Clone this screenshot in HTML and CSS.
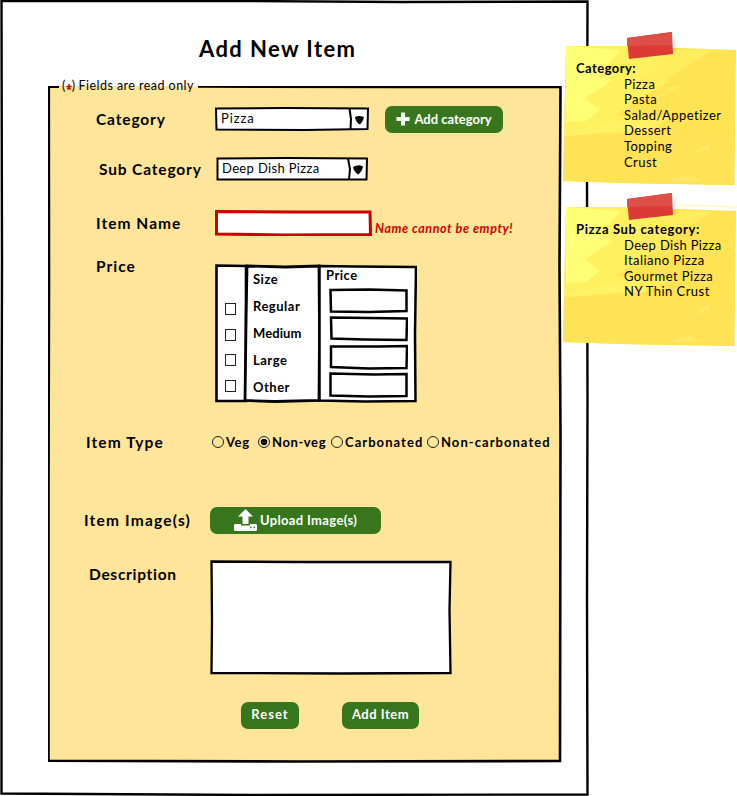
FILE: index.html
```
<!DOCTYPE html>
<html lang="en">
<head>
<meta charset="utf-8">
<title>Add New Item</title>
<link rel="stylesheet" href="styles.css">
</head>
<body>
<div class="board">
  <main class="page">
    <svg class="sketch" viewBox="0 0 589 796" preserveAspectRatio="none" aria-hidden="true">
      <path d="M1.500 1L240 1L400 2L587.500 1.500L587 180L587.500 400L587 600L587.500 794.500L250 795L1.500 793.500L1.500 500L2 260Z" fill="#fff" stroke="#000" stroke-width="2.4"/>
    </svg>
    <h1 class="title"><span>Add New Item</span></h1>
    <form class="form">
      <svg class="sketch" viewBox="0 0 514 677" preserveAspectRatio="none" aria-hidden="true">
        <path d="M0 0H513V676H0Z" fill="#ffe599"/>
        <path d="M11 .8H.8L1 200L.5 400L.5 674.800L250 675.500L512 675L512.500 350L511.500 180L512.500 1L350 1L150 .500" fill="none" stroke="#000" stroke-width="2.6"/>
      </svg>
      <div class="legend">(<svg class="star" viewBox="0 0 8 8"><path d="M4 0V4M.5 3L4 4L7.500 3M2 7.500L4 4L6 7.500" fill="none" stroke="#d00000" stroke-width="2"/></svg>) <span>Fields are read only</span></div>

      <div class="row row-category">
        <div class="label l-category">Category</div>
        <div class="select select-category">
          <svg class="sketch" viewBox="0 0 154 24" preserveAspectRatio="none"><path d="M1 1.500L70 1L153 1.500L152.500 22L90 23L1.500 22.500Z" fill="#fff" stroke="#000" stroke-width="2"/><path d="M134.500 1.500L136 12L135.500 22.500" fill="none" stroke="#000" stroke-width="2"/><path d="M140 10Q144 8 149 10Q148 15 145 17.500Q141 16 140 10Z"/></svg>
          <span class="t-pizza">Pizza</span>
        </div>
        <button type="button" class="button add-category"><svg class="plus" viewBox="0 0 14 14"><path d="M7 .5V13.500M.5 7H13.500" stroke="#fff" stroke-width="4"/></svg><span>Add category</span></button>
      </div>

      <div class="row row-sub">
        <div class="label l-sub">Sub Category</div>
        <div class="select select-sub">
          <svg class="sketch" viewBox="0 0 152 24" preserveAspectRatio="none"><path d="M1.500 1.500L70 1L151 1.500L150.500 22.500L90 22.500L1.500 22.500Z" fill="#fff" stroke="#000" stroke-width="2"/><path d="M132 1.500L134 12L133 22.500" fill="none" stroke="#000" stroke-width="2"/><path d="M137 10Q142 7 147 9.500Q146 15 142 17.500Q138 15 137 10Z"/></svg>
          <span>Deep Dish Pizza</span>
        </div>
      </div>

      <div class="row row-name">
        <div class="label l-name">Item Name</div>
        <div class="name-input">
          <svg class="sketch" viewBox="0 0 157 26" preserveAspectRatio="none"><path d="M1.500 1.500L80 2L155 2L155.500 24.500L70 25L1.500 24Z" fill="#fff" stroke="#cc0000" stroke-width="3"/></svg>
        </div>
        <div class="error">Name cannot be empty!</div>
      </div>

      <div class="row row-price">
        <div class="label l-price">Price</div>
        <div class="table">
          <svg class="sketch" viewBox="0 0 202 139" preserveAspectRatio="none"><path d="M1.500 1.500L31 2V137L1.500 137Z" fill="#fff" stroke="#000" stroke-width="2.600"/><path d="M32 2L70 3L104 2L104.500 70L104 136.500L60 137.500L30 136.500L31 60Z" fill="#fff" stroke="#000" stroke-width="2.800"/><path d="M104.500 2L140 2.500L201 3L200 70L200.500 137L150 137.500L104.500 136.500Z" fill="#fff" stroke="#000" stroke-width="2.500"/></svg>
          <div class="checks"><i class="check"></i><i class="check"></i><i class="check"></i><i class="check"></i></div>
          <div class="sizes"><span>Size</span><span>Regular</span><span class="tight">Medium</span><span>Large</span><span>Other</span></div>
          <div class="prices">
            <span>Price</span>
            <svg class="amount" viewBox="0 0 79 26"><path d="M1.500 2L40 1.500L77.500 2.500V23L40 24L2 23.500Z" fill="#fff" stroke="#000" stroke-width="2.500"/></svg>
            <svg class="amount" viewBox="0 0 79 26"><path d="M2 1.500L40 2L78 2.500L77.500 24L35 23.500L2.500 22.500Z" fill="#fff" stroke="#000" stroke-width="2.500"/></svg>
            <svg class="amount" viewBox="0 0 79 26"><path d="M2 2.500L50 2.500L78 2L77.500 24L40 24.500L2 23Z" fill="#fff" stroke="#000" stroke-width="2.500"/></svg>
            <svg class="amount" viewBox="0 0 79 26"><path d="M1.500 1.500L45 2.500L77.500 2V24L40 24.500L1.500 23.500Z" fill="#fff" stroke="#000" stroke-width="2.500"/></svg>
          </div>
        </div>
      </div>

      <div class="row row-type">
        <div class="label l-type">Item Type</div>
        <div class="radios">
          <label class="radio r-veg"><i class="dot"></i><span>Veg</span></label>
          <label class="radio r-non"><i class="dot on"></i><span>Non-veg</span></label>
          <label class="radio r-carb wide"><i class="dot"></i><span>Carbonated</span></label>
          <label class="radio wide"><i class="dot"></i><span>Non-carbonated</span></label>
        </div>
      </div>

      <div class="row row-image">
        <div class="label l-image">Item Image(s)</div>
        <button type="button" class="button upload"><svg class="upload-icon" viewBox="0 0 23 22"><path d="M11.500 0L19 7.500H14.500V15H8.500V7.500H4Z" fill="#fff"/><path d="M1 15H7V16.500H16V15H22L23 16V21L22 22H1L0 21V16Z" fill="#fff"/><path d="M16 18.500H17.500M19.500 18.500H21" stroke="#38761d" stroke-width="1.300"/></svg><span>Upload Image(s)</span></button>
      </div>

      <div class="row row-desc">
        <div class="label l-desc">Description</div>
        <div class="textarea">
          <svg class="sketch" viewBox="0 0 242 115" preserveAspectRatio="none"><path d="M1.500 1.500L90 2L240.500 2L239.500 50L240.500 113L130 113.500L1.500 113L2 60Z" fill="#fff" stroke="#000" stroke-width="2.300"/></svg>
        </div>
      </div>

      <div class="actions">
        <button type="button" class="button reset">Reset</button>
        <button type="button" class="button add-item">Add Item</button>
      </div>
    </form>
  </main>

  <aside class="notes">
    <section class="note">
      <svg class="paper" viewBox="0 0 174 155"><path d="M3 14L60 14L173 18L171.500 153L110 152L60 151L0 149L1 104Z" fill="#ffe352"/><path d="M3 14H62L110 20L74 51L108 48L52 83L110 86L80 100L1 104Z" fill="#fff060"/><path d="M3 14L58 18L36 42L50 48L22 66L37 78L23 89L3 90Z" fill="#ffff76"/><path d="M110 18H150L85 59L125 51L64 80L106 58L78 48Z" fill="#ffed5d"/><path d="M1 105L48 101L100 99L150 88L135 110L171 104V153L60 151L0 149Z" fill="#ffe255"/><path d="M4 101L50 90L100 94L46 99L2 104Z" fill="#fff266"/><path d="M124 125L145 112L147 116ZM104 149L126 142L138 149Z" fill="#ffe967"/><path d="M64 6L109 0L110 22L66 27Z" fill="#dc3a34"/><path d="M64 6L109 0V13L64 14Z" fill="#dd4f48"/></svg>
      <h2 class="n-category">Category:</h2>
      <ul><li>Pizza</li><li>Pasta</li><li>Salad/Appetizer</li><li>Dessert</li><li>Topping</li><li>Crust</li></ul>
    </section>
    <section class="note">
      <svg class="paper" viewBox="0 0 174 155"><path d="M116 12L174 14" stroke="#fff799" stroke-width="1"/><path d="M3 14L60 14L173 18L171.500 153L110 152L60 151L0 149L1 104Z" fill="#ffe352"/><path d="M3 14H62L110 20L74 51L108 48L52 83L110 86L80 100L1 104Z" fill="#fff060"/><path d="M3 14L58 18L36 42L50 48L22 66L37 78L23 89L3 90Z" fill="#ffff76"/><path d="M110 18H150L85 59L125 51L64 80L106 58L78 48Z" fill="#ffed5d"/><path d="M1 105L48 101L100 99L150 88L135 110L171 104V153L60 151L0 149Z" fill="#ffe255"/><path d="M4 101L50 90L100 94L46 99L2 104Z" fill="#fff266"/><path d="M124 125L145 112L147 116ZM104 149L126 142L138 149Z" fill="#ffe967"/><path d="M64 6L109 0L110 22L66 27Z" fill="#dc3a34"/><path d="M64 6L109 0V13L64 14Z" fill="#dd4f48"/></svg>
      <h2 class="n-sub">Pizza Sub category:</h2>
      <ul><li class="i-deep">Deep Dish Pizza</li><li>Italiano Pizza</li><li>Gourmet Pizza</li><li>NY Thin Crust</li></ul>
    </section>
  </aside>
</div>
</body>
</html>
```
FILE: styles.css
```
* { box-sizing: border-box; }
body { margin: 0; background: #fff; color: #000; font-family: Lato, "Noto Sans", sans-serif; font-size: 13px; overflow: hidden; }
.board { display: flex; width: 737px; height: 796px; }
.page { position: relative; flex: 0 0 589px; height: 796px; padding-left: 48px; }
.sketch { position: absolute; inset: 0; width: 100%; height: 100%; z-index: 0; }
.title { position: relative; margin: 0; height: 86px; padding: 35px 0 0 151px; font-size: 22px; line-height: 28px; font-weight: 700; letter-spacing: 1.400px; white-space: nowrap; }
.form { position: relative; width: 514px; height: 677px; display: flex; flex-direction: column; white-space: nowrap; }
.legend { position: relative; height: 14px; margin: -7px 0 0 14px; font-size: 12.5px; line-height: 14px; letter-spacing: .45px; display: flex; }
.legend span { margin-left: 3px; }
.star { width: 6px; height: 6px; margin-top: 5px; }
.row { position: relative; display: flex; align-items: flex-start; }
.label { flex: none; font-size: 15.500px; line-height: 20px; font-weight: 700; letter-spacing: .85px; }
.row-category { height: 30px; margin-top: 12px; }
.row-sub { height: 26px; margin-top: 22px; }
.row-name { height: 27px; margin-top: 27px; }
.row-price { height: 139px; margin-top: 27px; }
.row-type { height: 20px; margin-top: 29px; }
.row-image { height: 28px; margin-top: 55px; }
.row-desc { height: 115px; margin-top: 25px; }
.l-category { width: 167px; padding: 4px 0 0 48px; }
.l-sub { width: 168px; padding: 2px 0 0 51px; }
.l-name { width: 167px; padding: 3px 0 0 48px; letter-spacing: 1.050px; }
.l-price { width: 167px; padding-left: 48px; margin-top: -8px; letter-spacing: 1px; }
.l-type { width: 164px; padding-left: 38px; letter-spacing: 1.100px; }
.l-image { width: 162px; padding: 3px 0 0 36px; letter-spacing: 1.200px; }
.l-desc { width: 162px; padding: 4px 0 0 41px; letter-spacing: .7px; }
.select { position: relative; height: 24px; padding: 3px 0 0 6px; font-size: 13px; line-height: 17px; letter-spacing: .35px; }
.select span { position: relative; }
.t-pizza { letter-spacing: .9px; }
.select-category { width: 154px; margin-top: 2px; }
.select-sub { width: 152px; }
.button { display: flex; align-items: center; justify-content: center; padding: 0 0 2px; border: 0; border-radius: 7px; background: #38761d; color: #fff; font: 700 13px/18px Lato, "Noto Sans", sans-serif; height: 27px; }
.add-category { width: 118px; margin: 1px 0 0 16px; gap: 4px; }
.plus { width: 14px; height: 14px; }
.name-input { position: relative; width: 157px; height: 26px; }
.error { margin: 10px 0 0 3px; color: #c00; font-style: italic; font-weight: 700; font-size: 12.500px; line-height: 17px; letter-spacing: .6px; }
.table { position: relative; display: grid; grid-template-columns: 32px 73px 97px; width: 202px; height: 139px; font-weight: 700; font-size: 13px; letter-spacing: .5px; }
.checks { position: relative; display: flex; flex-direction: column; gap: 13.500px; padding: 39px 0 0 10px; }
.check { width: 11px; height: 12px; border: 1px solid #222; background: #fff; }
.sizes { position: relative; display: flex; flex-direction: column; padding: 2px 0 0 6px; line-height: 27px; }
.tight { letter-spacing: .1px; }
.prices { position: relative; display: flex; flex-direction: column; padding: 1px 0 0 9px; gap: 2px; }
.prices > span { line-height: 20px; height: 21px; margin-left: -3px; }
.amount { width: 79px; height: 26px; }
.radios { display: flex; font-size: 13px; font-weight: 700; line-height: 20px; letter-spacing: .6px; }
.radio { display: flex; }
.wide { letter-spacing: 1.050px; }
.r-veg { width: 46px; }
.r-non { width: 73px; }
.r-carb { width: 96px; }
.dot { width: 12px; height: 12px; margin: 4px 2px 0 0; border: 1px solid #222; border-radius: 50%; flex: none; }
.dot.on { background: radial-gradient(circle, #000 3px, transparent 3.600px); }
.upload { width: 171px; padding-right: 0; gap: 3px; letter-spacing: .35px; }
.upload-icon { width: 23px; height: 22px; }
.textarea { position: relative; width: 242px; height: 115px; }
.actions { position: relative; display: flex; gap: 43px; margin: 27px 0 0 193px; }
.reset { width: 58px; padding-bottom: 3px; letter-spacing: 1px; }
.add-item { width: 77px; padding-bottom: 3px; letter-spacing: .5px; }
.notes { position: relative; flex: none; width: 174px; margin-left: -26px; padding-top: 32px; }
.note { position: relative; height: 161px; padding: 29px 0 0 13px; font-size: 13px; line-height: 15.600px; letter-spacing: .45px; white-space: nowrap; }
.paper { position: absolute; top: 0; left: 0; width: 174px; height: 155px; }
.note h2 { position: relative; margin: 0; font-size: 13px; line-height: 15.600px; font-weight: 700; }
.n-sub { letter-spacing: .65px; }
.i-deep { letter-spacing: .35px; }
.note ul { position: relative; margin: 0; padding: 0 0 0 48px; list-style: none; }
```
